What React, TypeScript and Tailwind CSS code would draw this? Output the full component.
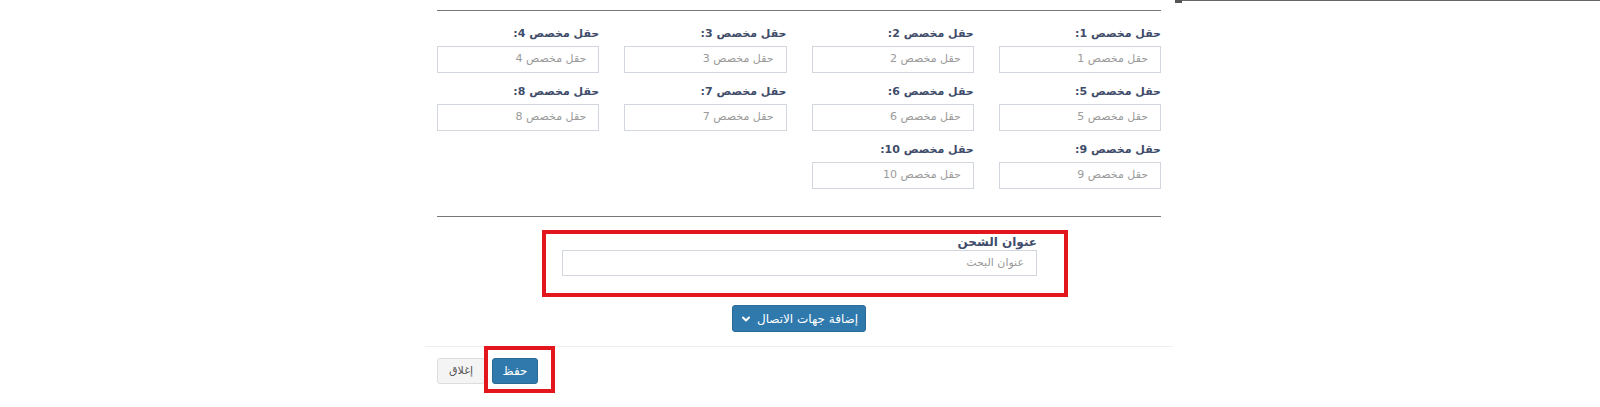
import { ChevronDown } from "lucide-react";

const fields = [1, 2, 3, 4, 5, 6, 7, 8, 9, 10];

const font = { fontFamily: '"DejaVu Sans", "Noto Sans", sans-serif' };

function Field({ n }: { n: number }) {
  return (
    <div className="flex flex-col">
      <label className="mb-[5px] h-[14px] text-[11px] font-bold leading-[14px] text-[#3f4d6b]">
        حقل مخصص {n}:
      </label>
      <div className="flex h-[27px] items-center border border-[#d2d6de] px-[12px] text-[11px] text-[#9a9a9a]">
        حقل مخصص {n}
      </div>
    </div>
  );
}

export default function App() {
  return (
    <div className="relative h-[407px] w-[1600px] overflow-hidden bg-white" style={font}>
      {/* stray edge of the page behind the modal */}
      <div className="absolute left-[1175px] right-0 top-0 h-px bg-[#666]" />
      <div className="absolute left-[1175px] top-0 h-[3px] w-[7px] bg-[#555]" />

      <div className="ml-[425px] flex w-[748px] flex-col">
        <div className="px-[12px]">
          <div className="mt-[10px] border-t border-[#777]" />

          <div dir="rtl" className="mt-[16px] grid grid-cols-4 gap-x-[25px] gap-y-[12px]">
            {fields.map((n) => (
              <Field key={n} n={n} />
            ))}
          </div>

          <div className="mt-[27px] border-t border-[#777]" />

          <div className="ml-[105px] mt-[13px] w-[526px] border-4 border-[#e3161e] pb-[17px] pl-[16px] pr-[27px] pt-[2px]">
            <div dir="rtl" className="flex flex-col">
              <label className="mb-[1px] h-[13px] text-[12px] font-bold leading-[13px] text-[#3f4d6b]">
                عنوان الشحن
              </label>
              <div className="flex h-[26px] items-center border border-[#d2d6de] px-[12px] text-[11px] text-[#9a9a9a]">
                عنوان البحث
              </div>
            </div>
          </div>

          <div className="mt-[8px] flex justify-center">
            <button
              dir="rtl"
              className="flex h-[27px] w-[134px] items-center justify-center gap-[5px] rounded-[3px] border border-[#2a6a97] bg-[#2f79ad] text-[12px] text-white"
            >
              <span>إضافة جهات الاتصال</span>
              <ChevronDown size={12} strokeWidth={4} />
            </button>
          </div>
        </div>

        <div className="relative mt-[14px] flex gap-[7px] border-t border-[#eeeeee] px-[12px] pt-[11px]">
          <button className="h-[26px] w-[48px] rounded-[3px] border border-[#dddddd] bg-[#f4f4f4] text-[11px] text-[#555]">
            إغلاق
          </button>
          <button className="h-[26px] w-[46px] rounded-[3px] border border-[#2a6a97] bg-[#2f79ad] text-[12px] text-white">
            حفظ
          </button>
          <div className="absolute left-[59px] top-[-1px] h-[47px] w-[71px] border-4 border-[#e3161e]" />
        </div>
      </div>
    </div>
  );
}
